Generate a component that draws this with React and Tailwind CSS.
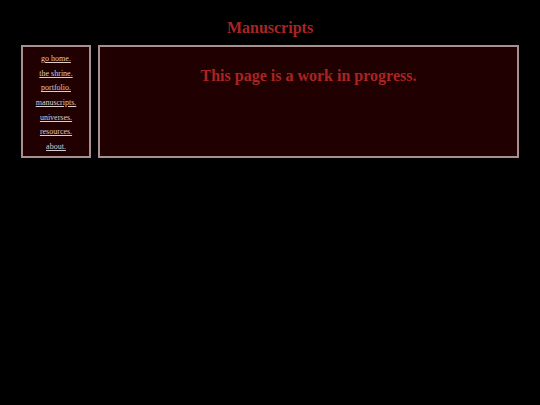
import React from 'react';

const links = ['go home.', 'the shrine.', 'portfolio.', 'manuscripts.', 'universes.', 'resources.', 'about.'];

const App = () => {
    return (
        <div className="min-h-[405px] bg-black px-[21px] font-['Liberation_Serif',serif]">
            <h1 className="pt-[19px] pb-[8px] text-center text-[16px] font-bold leading-[18px] text-[#aa2424]">
                Manuscripts
            </h1>
            <div className="flex gap-[7px]">
                {/* Sidebar */}
                <nav className="flex h-[113px] w-[70px] flex-col items-center gap-[4.7px] border-2 border-[#a89090] bg-[#200000] pt-[7px]">
                    {links.map((l) => (
                        <a
                            key={l}
                            href="#"
                            className="text-[8px] leading-[10px] text-[#dccccc] underline"
                        >
                            {l}
                        </a>
                    ))}
                </nav>

                {/* Main content */}
                <main className="h-[113px] flex-1 border-2 border-[#a89090] bg-[#200000]">
                    <h2 className="pt-[19px] text-center text-[16px] font-bold leading-[20px] text-[#aa2424]">
                        This page is a work in progress.
                    </h2>
                </main>
            </div>
        </div>
    );
};

export default App;
